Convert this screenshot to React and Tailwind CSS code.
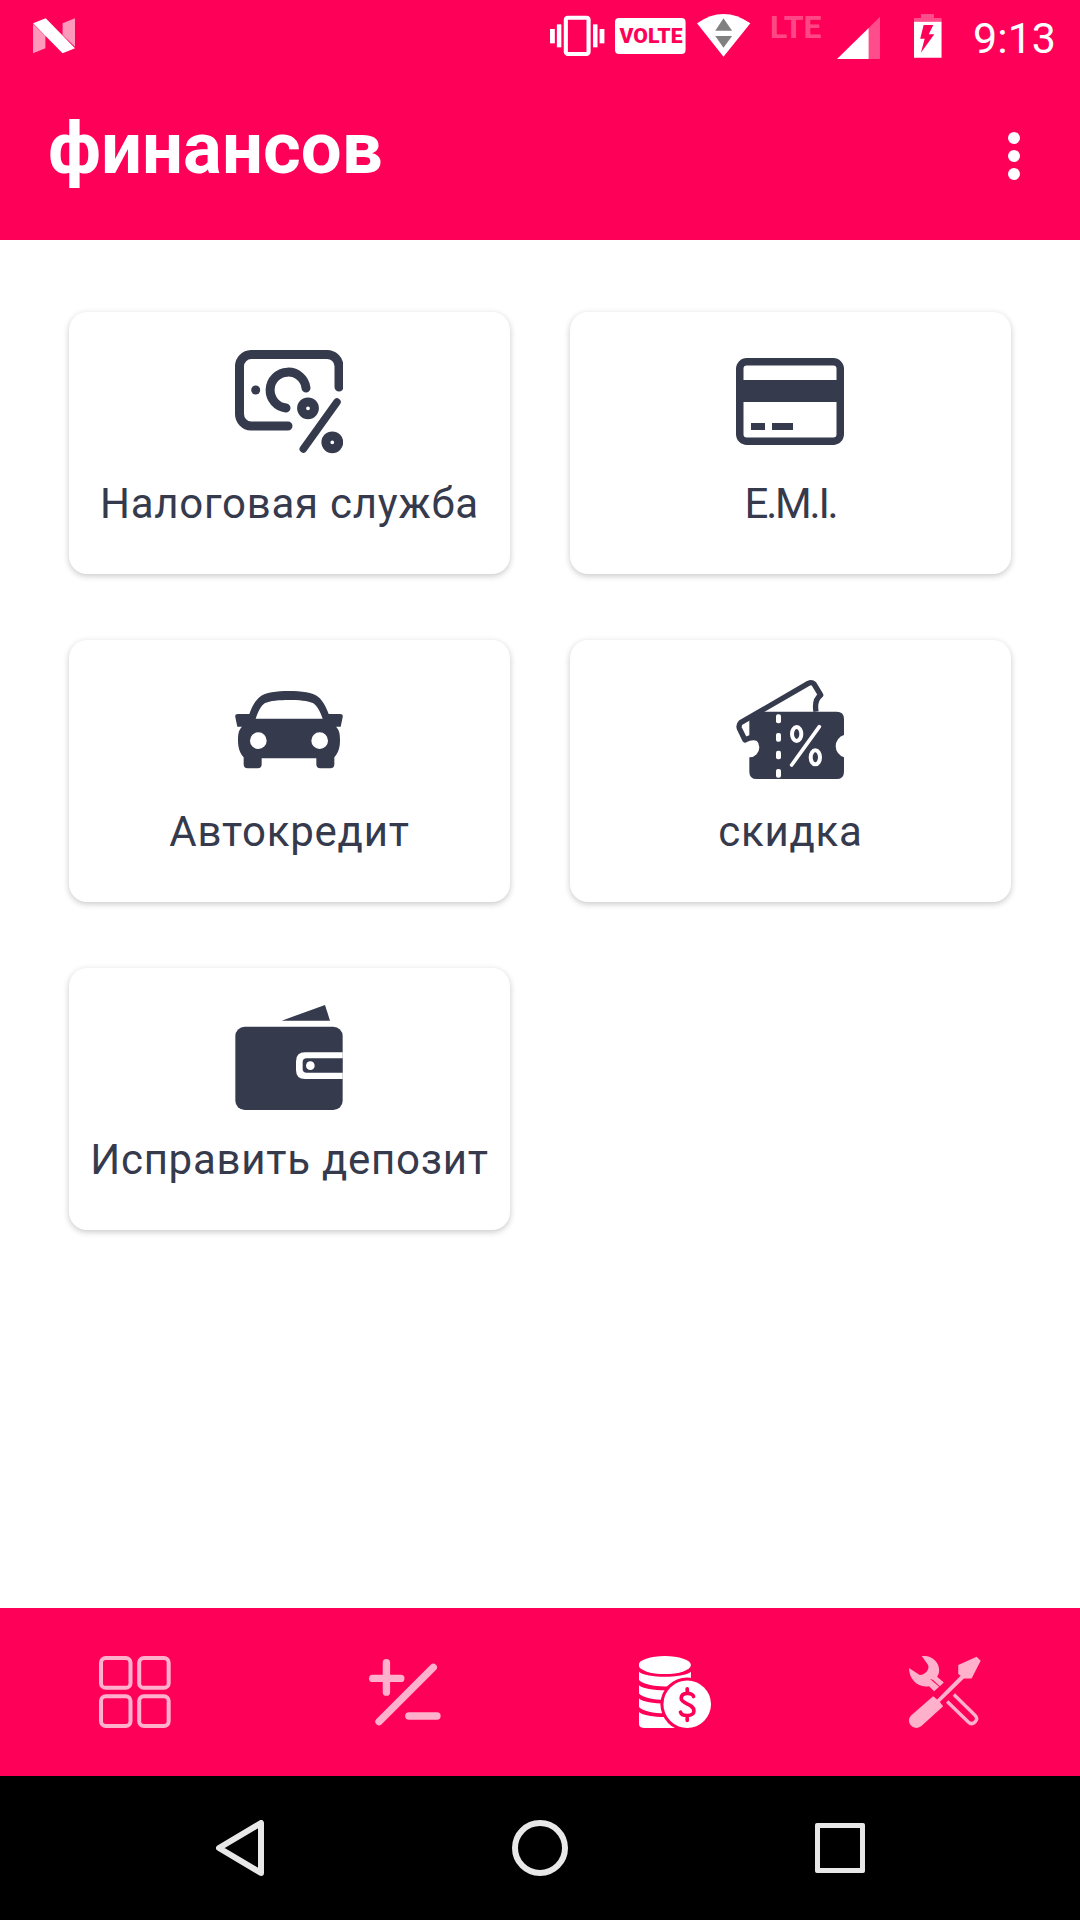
const INK = "#363a4d";
const PALE = "#ffb0cb";
const PINK = "#ff0059";

// status bar icons: coordinates are from a crop squeezed to 2.904x wide and 3x tall,
// every icon is 72px tall
function StatusIcon({ x, w, className = "", children }) {
  return (
    <svg
      width={w / 2.904}
      height={72}
      viewBox={`${x} 0 ${w} 216`}
      preserveAspectRatio="none"
      className={`overflow-visible ${className}`}
    >
      {children}
    </svg>
  );
}

function StatusBar() {
  return (
    <div className="h-[72px] flex items-center pl-[33px] pr-[24px]">
      <StatusIcon x={96} w={122}>
        <path d="M96 72L132 108V145L96 160Z" fill="#fff" fillOpacity="0.6" />
        <path d="M182 70L218 55V140L182 105Z" fill="#fff" fillOpacity="0.6" />
        <path d="M96 70L133 55L218 145L182 160Z" fill="#fff" />
      </StatusIcon>

      <StatusIcon x={32} w={158} className="ml-auto">
        <rect x="78" y="53" width="66" height="109" rx="6" fill="none" stroke="#fff" strokeWidth="12" />
        <rect x="32" y="87" width="14" height="43" fill="#fff" />
        <rect x="52" y="73" width="13" height="69" fill="#fff" />
        <rect x="157" y="73" width="13" height="69" fill="#fff" />
        <rect x="176" y="87" width="14" height="43" fill="#fff" />
      </StatusIcon>

      <StatusIcon x={222} w={205} className="ml-[11px]">
        <rect x="222" y="54" width="205" height="108" rx="12" fill="#fff" />
        <text
          x="235"
          y="130"
          textLength="183"
          lengthAdjust="spacingAndGlyphs"
          fontSize="62"
          fontWeight="900"
          fontFamily="Roboto, sans-serif"
          fill={PINK}
        >
          VOLTE
        </text>
      </StatusIcon>

      <StatusIcon x={458} w={155} className="ml-[11px]">
        <path d="M458 70Q535 14 613 70L535 170Z" fill="#fff" />
        <path d="M535 55L560 92H511Z" fill="#808080" />
        <path d="M511 108H560L535 143Z" fill="#808080" />
      </StatusIcon>

      <StatusIcon x={670} w={150} className="ml-[20px]">
        <text
          x="670"
          y="114"
          textLength="150"
          lengthAdjust="spacingAndGlyphs"
          fontSize="96"
          fontWeight="700"
          fontFamily="Roboto, sans-serif"
          fill="#fff"
          fillOpacity="0.3"
        >
          LTE
        </text>
      </StatusIcon>

      <StatusIcon x={863} w={125} className="ml-[15px]">
        <path d="M863 177L955 84V177Z" fill="#fff" />
        <path d="M955 84L988 50V177H955Z" fill="#fff" fillOpacity="0.3" />
      </StatusIcon>

      <StatusIcon x={1087} w={80} className="ml-[34px]">
        <path d="M1107 42H1145V54H1167V65H1087V54H1107Z" fill="#fff" fillOpacity="0.3" />
        <path d="M1087 65H1167V173H1087Z" fill="#fff" />
        <path d="M1115 75H1143L1130 103H1146L1107 158L1118 116H1105Z" fill={PINK} />
      </StatusIcon>

      <span className="ml-[32px] text-[43px] leading-none text-white [font-family:Roboto,sans-serif] translate-y-[2px]">
        9:13
      </span>
    </div>
  );
}

function TaxIcon() {
  return (
    <svg width="108" height="108" viewBox="0 0 108 108" fill="none" stroke={INK} strokeWidth="9" strokeLinecap="round" className="mr-[2px]">
      <path d="M104 37V16A12 12 0 0 0 92 4.5H16A12 12 0 0 0 4.5 16V64A12 12 0 0 0 16 76H53" />
      <circle cx="20.7" cy="40" r="4.5" fill={INK} stroke="none" />
      <path d="M71 38A18 18 0 1 0 51 58" />
      <circle cx="73" cy="58.3" r="6.4" />
      <circle cx="97.3" cy="92.3" r="6.4" />
      <path d="M102 52L68.3 99" strokeWidth="7.5" />
    </svg>
  );
}

function CardIcon() {
  return (
    <svg width="108" height="108" viewBox="0 0 108 108" className="mr-[2px]">
      <rect x="3.75" y="11.75" width="100.5" height="79.5" rx="7" fill="none" stroke={INK} strokeWidth="7.5" />
      <rect x="0" y="30" width="108" height="22" fill={INK} />
      <rect x="15" y="73" width="14" height="7" fill={INK} />
      <rect x="36" y="73" width="21" height="7" fill={INK} />
    </svg>
  );
}

function CarIcon() {
  return (
    <svg width="108" height="108" viewBox="75 24 324 324" className="mr-[2px]">
      <path
        fill={INK}
        fillRule="evenodd"
        d="M237 63C200 63 165 68 150 80C135 92 125 112 118 132H84Q74 132 76 142L82 170H96C86 180 84 192 84 210C84 235 90 250 101 262V283Q101 295 113 295H143Q155 295 155 283V265H319V283Q319 295 331 295H361Q373 295 373 283V262C384 250 390 235 390 210C390 192 388 180 378 170H392L398 142Q400 132 390 132H356C349 112 339 92 324 80C309 68 274 63 237 63ZM137 146H338C330 125 322 108 310 100C295 92 265 90 237 90C209 90 179 92 164 100C152 108 145 125 137 146ZM145 187A25 25 0 1 0 145 237A25 25 0 1 0 145 187ZM329 187A25 25 0 1 0 329 237A25 25 0 1 0 329 187Z"
      />
    </svg>
  );
}

function TicketIcon() {
  return (
    <svg width="108" height="108" viewBox="78 54 324 324" className="mr-[2px]">
      <path
        fill="none"
        stroke={INK}
        strokeWidth="16"
        strokeLinejoin="round"
        d="M155 240Q130 225 105 240L88 205Q85 195 92 188L295 70Q305 65 312 72L332 105Q312 120 318 155"
      />
      <path
        fill={INK}
        d="M160 155H380Q402 155 402 177V225A35 35 0 0 0 402 292V335Q402 357 380 357H140Q118 357 118 335V292A30 30 0 0 0 118 232V180Z"
      />
      <g fill="#fff">
        <rect x="198" y="163" width="15" height="27" rx="6" />
        <rect x="198" y="219" width="15" height="26" rx="6" />
        <rect x="198" y="272" width="15" height="26" rx="6" />
        <rect x="198" y="327" width="15" height="26" rx="6" />
      </g>
      <ellipse cx="260" cy="222" rx="14" ry="21" fill="none" stroke="#fff" strokeWidth="12" />
      <ellipse cx="316" cy="292" rx="14" ry="21" fill="none" stroke="#fff" strokeWidth="12" />
      <path d="M328 200L245 315" stroke="#fff" strokeWidth="11" strokeLinecap="round" />
    </svg>
  );
}

function WalletIcon() {
  return (
    <svg width="108" height="108" viewBox="75 48 324 324" className="overflow-visible mr-[2px]">
      <path d="M215 92L345 45L360 92Z" fill={INK} />
      <rect x="76" y="110" width="322" height="250" rx="28" fill={INK} />
      <path d="M398 187H285Q258 187 258 214V240Q258 267 285 267H398Z" fill="#fff" />
      <path d="M398 205H290Q278 205 278 217V236Q278 248 290 248H398Z" fill={INK} />
      <circle cx="301" cy="227" r="13" fill="#fff" />
    </svg>
  );
}

const cards = [
  { label: "Налоговая служба", Icon: TaxIcon, tracking: "tracking-[0.75px]" },
  { label: "E.M.I.", Icon: CardIcon, tracking: "tracking-[-2.2px]" },
  { label: "Автокредит", Icon: CarIcon, tracking: "tracking-[0.75px]" },
  { label: "скидка", Icon: TicketIcon, tracking: "tracking-[0.75px]" },
  { label: "Исправить депозит", Icon: WalletIcon, tracking: "tracking-[0.75px]" },
];

function GridNavIcon() {
  return (
    <svg width="72" height="72" viewBox="118 78 215 215" fill="none" stroke={PALE} strokeWidth="12">
      <rect x="124" y="84" width="88" height="89" rx="14" />
      <rect x="238" y="84" width="88" height="89" rx="14" />
      <rect x="124" y="198" width="88" height="89" rx="14" />
      <rect x="238" y="198" width="88" height="89" rx="14" />
    </svg>
  );
}

function CalcNavIcon() {
  return (
    <svg width="72" height="72" viewBox="928 78 215 215" fill="none" stroke={PALE} strokeWidth="22" strokeLinecap="round">
      <path d="M939 145H1023M980 98V186M958 274L1120 112M1047 257H1131" />
    </svg>
  );
}

function CoinsNavIcon() {
  return (
    <svg width="72" height="72" viewBox="118 78 215 215">
      <ellipse cx="195" cy="105" rx="78" ry="27" fill="#fff" />
      <g fill="#fff">
        <path d="M118 125C140 145 250 145 273 125V150C250 175 140 175 118 150Z" />
        <path d="M118 165C140 185 250 185 273 165V190C250 215 140 215 118 190Z" />
        <path d="M118 205C140 225 250 225 273 205V230C250 255 140 255 118 230Z" />
        <path d="M118 245C140 265 250 265 273 245V293H135Q118 293 118 280Z" />
      </g>
      <circle cx="262" cy="222" r="80" fill={PINK} />
      <circle cx="262" cy="222" r="71" fill="#fff" />
      <path
        d="M281 199C278 187 245 185 244 204C244 222 282 220 282 242C282 260 246 259 242 246M262 176V186M262 259V270"
        fill="none"
        stroke={PINK}
        strokeWidth="11"
        strokeLinecap="round"
      />
    </svg>
  );
}

function ToolsNavIcon() {
  return (
    <svg width="72" height="72" viewBox="928 78 215 215">
      <g fill={PALE}>
        <path d="M966 78C995 75 1018 95 1018 120C1018 128 1016 135 1012 140L1032 157L1020 168L1000 150L990 146L1018 170L1003 183L988 168C958 175 928 150 928 114L960 135C975 135 990 120 985 105Z" />
        <path d="M1075 105L1130 80L1142 92L1115 145H1092L1020 215L1030 228L965 287Q945 300 932 283Q922 268 935 255L1000 198L1012 208L1082 137L1075 132Z" />
      </g>
      <path
        d="M1042 214L1105 275Q1115 285 1125 275Q1135 265 1125 255L1062 193"
        fill="none"
        stroke={PALE}
        strokeWidth="10"
      />
    </svg>
  );
}

export default function App() {
  return (
    <div className="w-[1080px] h-[1920px] flex flex-col bg-white overflow-hidden [font-family:Roboto,sans-serif]">
      {/* Header */}
      <header className="h-[240px] bg-[#ff0059]">
        <StatusBar />
        <div className="h-[168px] flex items-center justify-between pl-[48px] pr-[60px]">
          <h1 className="text-[72.5px] leading-none font-bold text-white -translate-y-[7px]">
            финансов
          </h1>
          <div className="flex flex-col gap-[6px]">
            <span className="w-3 h-3 rounded-full bg-white" />
            <span className="w-3 h-3 rounded-full bg-white" />
            <span className="w-3 h-3 rounded-full bg-white" />
          </div>
        </div>
      </header>

      {/* Cards */}
      <main className="flex-1 pt-[72px] px-[69px]">
        <div className="grid grid-cols-[441px_441px] gap-x-[60px] gap-y-[66px]">
          {cards.map(({ label, Icon, tracking }) => (
            <div
              key={label}
              className="h-[262px] pt-[38px] flex flex-col items-center rounded-[18px] bg-white shadow-[0_2px_6px_rgba(0,0,0,0.22)]"
            >
              <Icon />
              <span className={`mt-[21px] text-[42px] leading-[50px] whitespace-nowrap text-[#363a4d] ${tracking}`}>
                {label}
              </span>
            </div>
          ))}
        </div>
      </main>

      {/* Bottom tabs */}
      <nav className="h-[168px] bg-[#ff0059] grid grid-cols-4 items-center justify-items-center">
        <GridNavIcon />
        <CalcNavIcon />
        <CoinsNavIcon />
        <ToolsNavIcon />
      </nav>

      {/* Android nav */}
      <div className="h-[144px] bg-black grid grid-cols-3 px-[90px] items-center justify-items-center">
        <svg width="48" height="56" viewBox="0 0 48 56" fill="none" stroke="#e8e8e8" strokeWidth="6" strokeLinejoin="round">
          <path d="M45 3V53L3 28Z" />
        </svg>
        <div className="w-[56px] h-[56px] rounded-full border-[6px] border-[#e8e8e8]" />
        <div className="w-[50px] h-[50px] rounded-[2px] border-[5px] border-[#e8e8e8]" />
      </div>
    </div>
  );
}
